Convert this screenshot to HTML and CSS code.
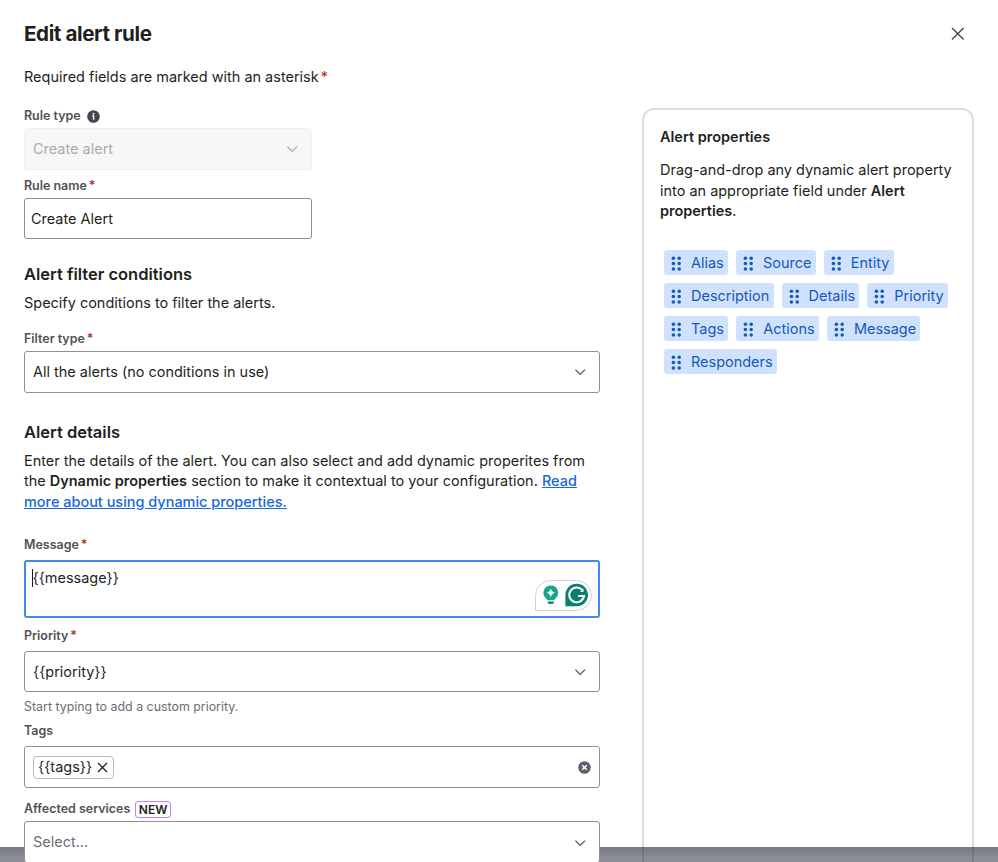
FILE: index.html
```html
<!DOCTYPE html>
<html lang="en">
<head>
  <meta charset="UTF-8" />
  <meta name="viewport" content="width=device-width, initial-scale=1.0"/>
  <title>Edit alert rule</title>
  <link rel="stylesheet" href="styles.css">
</head>
<body>
  <svg class="sprite" width="0" height="0">
    <symbol id="chevron" viewBox="0 0 12 8">
      <path d="M1.4 1.6 6.2 6.4 11 1.6" fill="none" stroke="currentColor" stroke-width="1.3"/>
    </symbol>
    <symbol id="drag" viewBox="0 0 10 15">
      <circle cx="2.4" cy="2.2" r="1.75"/><circle cx="8.2" cy="2.2" r="1.75"/>
      <circle cx="2.4" cy="7.6" r="1.75"/><circle cx="8.2" cy="7.6" r="1.75"/>
      <circle cx="2.4" cy="13" r="1.75"/><circle cx="8.2" cy="13" r="1.75"/>
    </symbol>
  </svg>

  <div class="modal">
    <header class="modal-header">
      <h1>Edit alert rule</h1>
      <button type="button" class="close-btn" aria-label="Close">
        <svg width="14" height="14" viewBox="0 0 14 14"><path d="M1 1l11.6 11.6M12.6 1L1 12.6" stroke="currentColor" stroke-width="1.4"/></svg>
      </button>
    </header>
    <p class="required-note">Required fields are marked with an asterisk<span class="asterisk">*</span></p>

    <div class="modal-body">
      <form class="rule-form">
        <div class="field short">
          <div class="label">Rule type
            <svg class="info" width="13" height="13" viewBox="0 0 13 13"><circle cx="6.5" cy="6.5" r="6.3" fill="#44474f"/><circle cx="6.5" cy="3.7" r=".95" fill="#fff"/><path d="M5.2 5.9h1.4v3.8" fill="none" stroke="#fff" stroke-width="1.4"/></svg>
          </div>
          <div class="select disabled"><span>Create alert</span><svg class="chevron"><use href="#chevron"/></svg></div>
        </div>
        <div class="field short rule-name">
          <div class="label">Rule name<span class="asterisk">*</span></div>
          <div class="select text-input">Create Alert</div>
        </div>

        <h2>Alert filter conditions</h2>
        <p class="filter-text">Specify conditions to filter the alerts.</p>
        <div class="field filter-type">
          <div class="label">Filter type<span class="asterisk">*</span></div>
          <div class="select"><span>All the alerts (no conditions in use)</span><svg class="chevron"><use href="#chevron"/></svg></div>
        </div>

        <h2 class="details-title">Alert details</h2>
        <p class="details-text">Enter the details of the alert. You can also select and add dynamic properites from<br>the <b>Dynamic properties</b> section to make it contextual to your configuration. <a href="#">Read<br>more about using dynamic properties.</a></p>

        <div class="field wide-gap message">
          <div class="label">Message<span class="asterisk">*</span></div>
          <div class="textarea"><span class="caret"></span>{{message}}
            <div class="assistant">
              <svg width="16" height="20" viewBox="0 0 16 20">
                <path d="M8 .3a7.6 7.6 0 0 0-4.6 13.6q.9.8 1 1.4h7.2q.1-.6 1-1.4A7.6 7.6 0 0 0 8 .3Z" fill="#14a78b"/>
                <path d="M8 3.3q.9 3.6 4.400 4.5-3.500.9-4.400 4.500-.9-3.600-4.400-4.500 3.500-.9 4.400-4.500Z" fill="#fff"/>
                <path d="M4.5 16.6h7q-.3 2.6-2.3 2.6H6.8q-2 0-2.3-2.6Z" fill="#0b8470"/>
              </svg>
              <svg width="24" height="24" viewBox="0 0 24 24">
                <path d="M12 .4A11.6 11.6 0 1 1 12 23.6H.4V12A11.6 11.6 0 0 1 12 .4Z" fill="#0b7f6c"/>
                <path d="M17.8 7A7.6 7.6 0 1 0 19.5 13H13.4" fill="none" stroke="#fff" stroke-width="2.1"/>
                <path d="M18.9 5v4h-3.500Z" fill="#fff"/>
              </svg>
            </div>
          </div>
        </div>
        <div class="field wide-gap priority">
          <div class="label">Priority<span class="asterisk">*</span></div>
          <div class="select"><span>{{priority}}</span><svg class="chevron"><use href="#chevron"/></svg></div>
          <div class="help">Start typing to add a custom priority.</div>
        </div>
        <div class="field wide-gap tags">
          <div class="label">Tags</div>
          <div class="select">
            <span class="tag">{{tags}}<svg width="11" height="11" viewBox="0 0 11 11"><path d="M1 1l9 9M10 1L1 10" stroke="currentColor" stroke-width="1.3"/></svg></span>
            <svg class="clear" width="13" height="13" viewBox="0 0 13 13"><circle cx="6.5" cy="6.5" r="6.3" fill="#5d606a"/><path d="M4.2 4.2l4.6 4.6M8.8 4.2L4.2 8.8" stroke="#fff" stroke-width="1.5"/></svg>
          </div>
        </div>
        <div class="field services">
          <div class="label">Affected services<span class="lozenge">NEW</span></div>
          <div class="select placeholder"><span>Select...</span><svg class="chevron"><use href="#chevron"/></svg></div>
        </div>
      </form>

      <aside class="properties">
        <h3>Alert properties</h3>
        <p>Drag-and-drop any dynamic alert property<br>into an appropriate field under <b>Alert<br>properties</b>.</p>
        <div class="chips">
          <span class="chip"><svg><use href="#drag"/></svg>Alias</span>
          <span class="chip"><svg><use href="#drag"/></svg>Source</span>
          <span class="chip"><svg><use href="#drag"/></svg>Entity</span>
          <span class="chip"><svg><use href="#drag"/></svg>Description</span>
          <span class="chip"><svg><use href="#drag"/></svg>Details</span>
          <span class="chip"><svg><use href="#drag"/></svg>Priority</span>
          <span class="chip"><svg><use href="#drag"/></svg>Tags</span>
          <span class="chip"><svg><use href="#drag"/></svg>Actions</span>
          <span class="chip"><svg><use href="#drag"/></svg>Message</span>
          <span class="chip"><svg><use href="#drag"/></svg>Responders</span>
        </div>
      </aside>
    </div>
  </div>
</body>
</html>
```

FILE: styles.css
```css
* {
  box-sizing: border-box;
  margin: 0;
  padding: 0;
}

body {
  height: 862px;
  overflow: hidden;
  background: linear-gradient(#767a84 847px, #8b8d98 858px);
  font-family: Inter, sans-serif;
  font-size: 14.47px;
  line-height: 20.7px;
  color: #1e1f21;
}

.sprite {
  position: absolute;
}

.modal {
  height: 847px;
  background: #fff;
  padding: 0 24px;
}

.modal-header {
  display: flex;
  align-items: center;
  justify-content: space-between;
  height: 67px;
}

h1 {
  padding-top: 2px;
  font-size: 20.6px;
  font-weight: 650;
  letter-spacing: -0.4px;
}

.close-btn {
  display: flex;
  border: none;
  background: none;
  color: #44474f;
  margin-right: 9px;
}

.asterisk {
  color: #ae2e24;
  margin-left: 2px;
}

.modal-body {
  display: flex;
  justify-content: space-between;
  align-items: flex-start;
  margin-top: 20.3px;
}

.rule-form {
  width: 576px;
}

.short {
  width: 288px;
}

.label {
  display: flex;
  align-items: center;
  height: 16px;
  margin-bottom: 4px;
  font-size: 12.45px;
  line-height: 16px;
  font-weight: 620;
  color: #505258;
}

.wide-gap .label {
  margin-bottom: 7px;
}

.info {
  margin-left: 6px;
}

.select {
  display: flex;
  align-items: center;
  justify-content: space-between;
  height: 41.5px;
  padding: 1px 13px 0 8px;
  border: 1px solid #8c8f97;
  border-radius: 3px;
  background: #fff;
}

.select.disabled {
  background: #f7f7f7;
  border-color: #f0f0f1;
  color: #a9abaf;
}

.text-input {
  padding-left: 6px;
}

.select.placeholder span {
  color: #6b6e76;
}

.chevron {
  width: 12px;
  height: 8px;
  color: #505258;
}

.disabled .chevron {
  color: #a9abaf;
}

.rule-name {
  margin-top: 8.4px;
}

h2 {
  margin: 23.1px 0 7px;
  font-size: 16.5px;
  line-height: 24px;
  font-weight: 640;
}

.filter-type {
  margin-top: 17px;
}

.details-title {
  margin-top: 27px;
}

b,
h3 {
  font-weight: 640;
}

a {
  color: #1868db;
  font-weight: 500;
}

.message {
  margin-top: 24.2px;
}

.textarea {
  position: relative;
  height: 58px;
  padding: 6px 6.5px;
  border: 2px solid #4688ec;
  border-radius: 3px;
}

.caret {
  position: absolute;
  top: 7px;
  left: 6px;
  width: 1px;
  height: 18px;
  background: #1e1f21;
}

.assistant {
  position: absolute;
  right: 6px;
  bottom: 5px;
  display: flex;
  align-items: center;
  gap: 6px;
  width: 57px;
  height: 31px;
  padding: 0 3px 0 7px;
  border: 1px solid #cfd1de;
  border-radius: 16px 16px 16px 0;
  background: #fff;
}

.priority {
  margin-top: 10px;
}

.help {
  margin-top: 6.3px;
  font-size: 12.4px;
  line-height: 16px;
  color: #6b6e76;
}

.tags {
  margin-top: 8.5px;
}

.tags .select {
  padding-top: 0;
  padding-right: 8px;
}

.tag {
  display: flex;
  align-items: center;
  gap: 5px;
  height: 23px;
  padding: 0 5px 0 4px;
  border: 1px solid #b7b9be;
  border-radius: 4px;
}

.services {
  margin-top: 13.5px;
}

.lozenge {
  margin-left: 4.5px;
  padding: 0 3px;
  border: 1px solid #c97cf4;
  border-radius: 3px;
  font-size: 12px;
  line-height: 15px;
  color: #1e1f21;
}

.properties {
  width: 332px;
  height: 780px;
  padding: 17px 16px;
  border: 2px solid rgba(11, 18, 14, 0.14);
  border-radius: 12px;
}

h3 {
  margin-bottom: 13px;
  font-size: 14.5px;
  line-height: 20px;
}

.chips {
  display: flex;
  flex-wrap: wrap;
  gap: 8px;
  margin: 28.2px 0 0 4px;
}

.chip {
  display: flex;
  align-items: center;
  height: 25px;
  padding: 1px 4.3px 0 7px;
  border-radius: 3px;
  background: #cfe1fd;
  color: #1558bc;
}

.chip svg {
  width: 10px;
  height: 15px;
  margin-right: 10px;
  fill: currentColor;
}
```
